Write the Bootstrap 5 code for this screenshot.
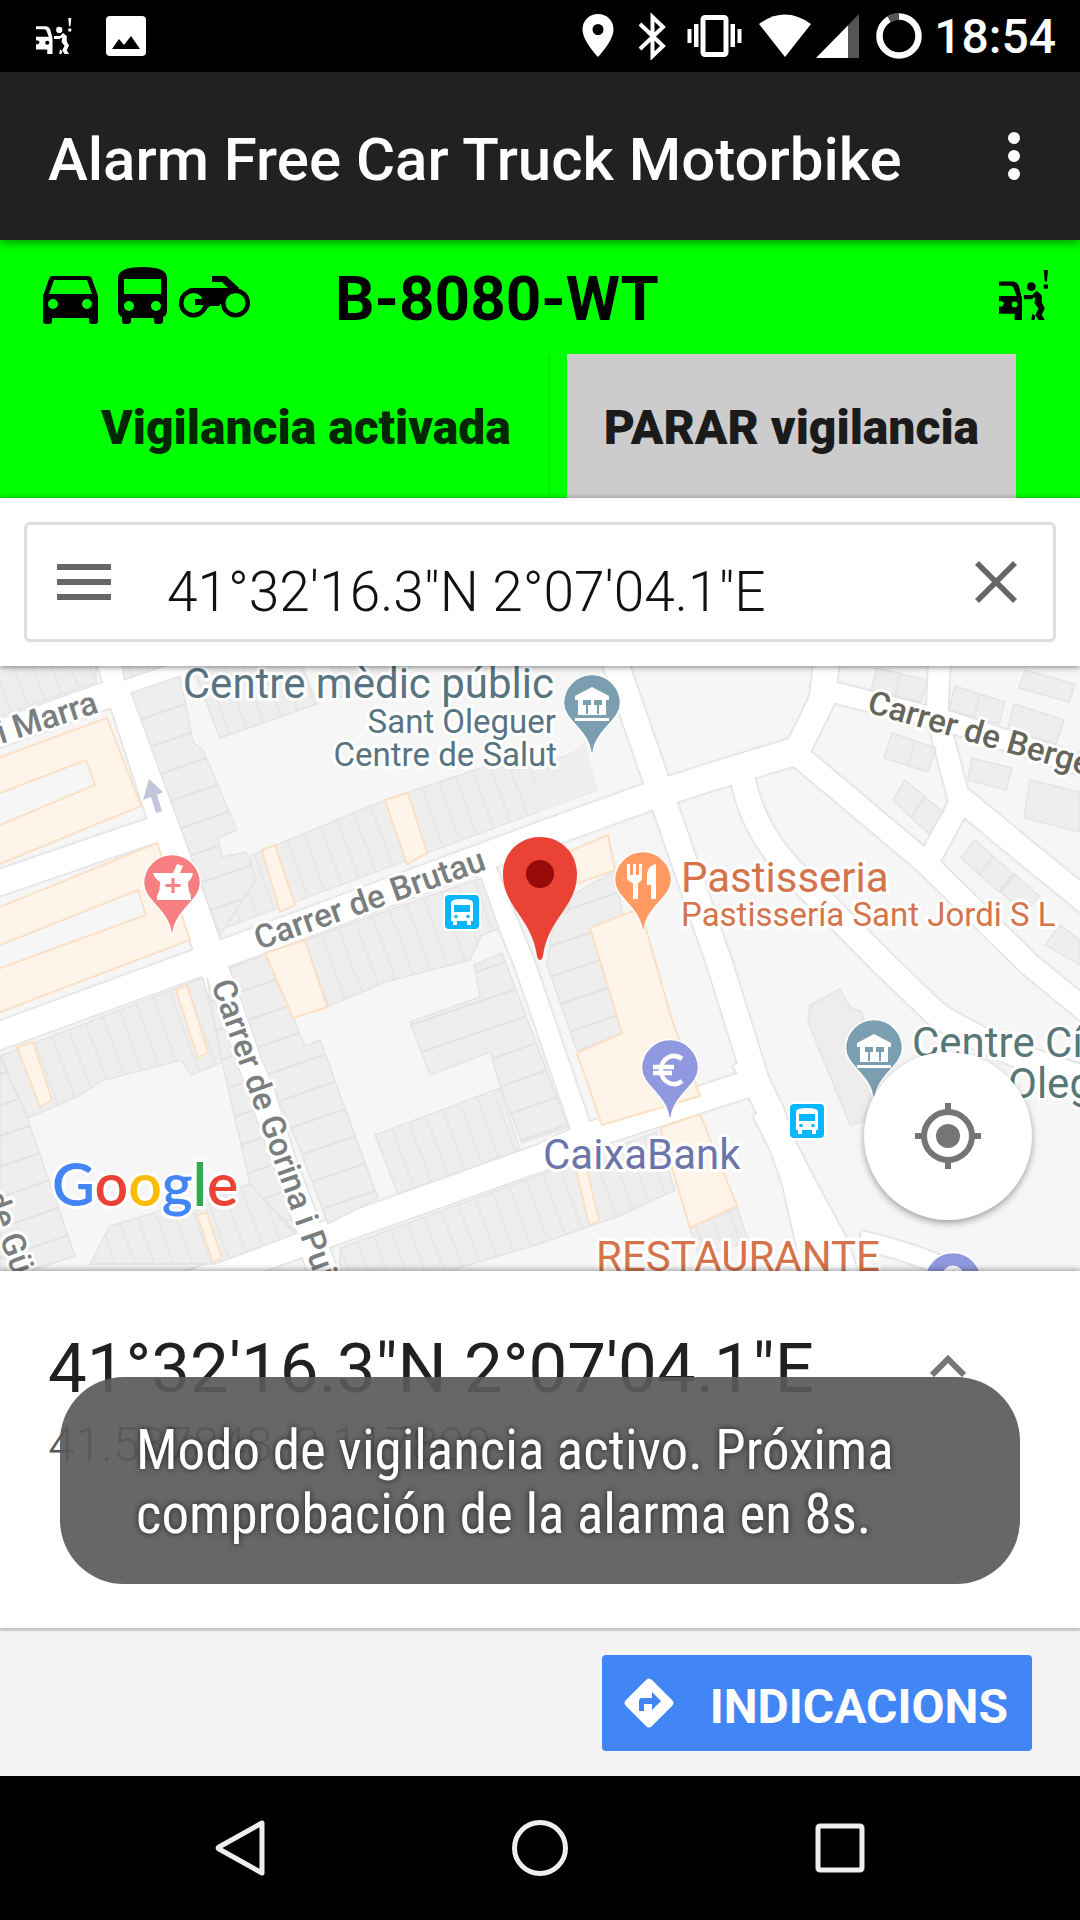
<!DOCTYPE html>
<html lang="es">
<head>
<meta charset="utf-8">
<meta name="viewport" content="width=device-width, initial-scale=1">
<title>Alarm Free Car Truck Motorbike</title>
<link href="https://cdn.jsdelivr.net/npm/bootstrap@5.3.0/dist/css/bootstrap.min.css" rel="stylesheet">
<style>
  body { font-family: Roboto, "Liberation Sans", sans-serif; color: #212121; line-height: 1.2; }
  svg { display: block; flex: none; }
  .btn-plain { background: none; border: 0; padding: 0; border-radius: 0; }
  .status-bar { background: #000; color: #fff; height: 72px; padding: 0 24px 0 36px; }
  .status-time { font-size: 48px; font-weight: 500; line-height: 72px; padding-top: 2px; margin-left: 9px; }
  .app-bar { background: #212121; color: #fff; height: 168px; padding: 8px 48px 0; box-shadow: 0 2px 10px rgba(0,0,0,.45); position: relative; z-index: 2; }
  .app-title { font-size: 60px; font-weight: 500; line-height: 72px; margin: 0; }
  .vehicle-zone { background: #0f0; color: #000; }
  .plate-row { height: 114px; padding: 0 31px 4px 43px; }
  .plate { font-size: 62px; font-weight: 700; line-height: 72px; margin: 8px 0 0 82px; }
  .watch-row { gap: 16px; padding: 0 64px; }
  .watch-btn { font-size: 48px; font-weight: 900; line-height: 56px; padding: 46px 37px 42px; border: 0; border-radius: 0; color: rgba(0,0,0,.87); white-space: nowrap; }
  .watch-on { background: #0f0; border-right: 3px solid #00f200; }
  .watch-stop { background: #ccc; color: #1b1b1b; }
  .search-zone { background: #fff; padding: 24px; box-shadow: 0 1px 6px rgba(0,0,0,.5); position: relative; z-index: 1; }
  .search-box { height: 120px; border: 3px solid #ddd; border-radius: 6px; padding: 0 36px 0 30px; }
  .search-box input { font-size: 55px; font-weight: 300; color: #111; border: 0; padding: 20px 0 0; margin-left: 56px; background: none; outline: 0; min-width: 0; }
  .map-zone { flex: 1 1 0; min-height: 300px; position: relative; overflow: hidden; background: #f5f5f5; }
  .map-zone > svg { width: 100%; height: 100%; position: absolute; inset: 0; }
  .locate-btn { position: absolute; right: 48px; bottom: 51px; width: 168px; height: 168px; border-radius: 50%; border: 0; background: #fff; box-shadow: 0 3px 7px rgba(0,0,0,.35); }
  .place-zone { background: #fff; height: 357px; padding: 56px 48px 0; position: relative; box-shadow: 0 -1px 6px rgba(0,0,0,.4); }
  .place-title { font-size: 69px; font-weight: 400; line-height: 84px; margin: 0; color: #212121; }
  .place-sub { font-size: 48px; font-weight: 300; line-height: 52px; margin: 8px 0 0; color: #555; }
  .chevron-btn { margin: 24px 66px 0 0; }
  .toast-note { position: absolute; left: 60px; right: 60px; top: 106px; padding: 41px 60px 38px 76px; border-radius: 64px; background: rgba(90,90,90,.92); color: #fff; font-family: "Roboto Condensed", Roboto, "Liberation Sans", sans-serif; font-size: 55px; line-height: 64px; text-shadow: 0 0 6px rgba(0,0,0,.7); }
  .action-zone { background: #f4f4f4; border-top: 3px solid #ddd; padding: 24px 48px 25px; }
  .route-btn { background: #4285f4; color: #fff; font-size: 48px; font-weight: 700; line-height: 56px; height: 96px; border: 0; border-radius: 4px; padding: 0 24px 0 22px; gap: 36px; }
  .route-btn span { padding-top: 8px; }
  .nav-zone { background: #000; height: 144px; padding: 0 212px; }
  .halo text { stroke: #fff; stroke-width: 6px; stroke-linejoin: round; paint-order: stroke; }
  .road-case { fill: none; stroke: #e6e6e6; stroke-linejoin: round; }
  .road-fill { fill: none; stroke: #fff; stroke-linejoin: round; }
</style>
</head>
<body class="min-vh-100 d-flex flex-column bg-white">

<svg width="0" height="0" class="position-absolute" aria-hidden="true">
  <symbol id="thief" viewBox="0 0 48 48">
    <path d="M0 11h14q5 1 6 8l2 8v21h-7v-6H0v-7h3l2-3-2-2H0v-5h17l-3-8q-1-2-3-2H0z"/>
    <circle cx="15" cy="33" r="2.800" fill="var(--hole)"/>
    <circle cx="31" cy="16" r="4.200"/>
    <path d="M24 24h8l4-4 5 4v7l3 6-3 6 3 5h-6l-3-5 3-6-4-5 1-6-4 2h-7zM32 42l3 2-1 4h-3zM43 0h4l-1 11h-2zM43 14h4v4h-4z"/>
  </symbol>
</svg>

<header>
  <div class="status-bar d-flex align-items-center">
    <svg width="36" height="36" fill="#fff" style="--hole:#000"><use href="#thief"/></svg>
    <svg class="ms-auto order-1" width="348" height="48" viewBox="578 12 348 48" fill="#fff">
      <path fill-rule="evenodd" d="M599 14c-9 0-15.500 6.500-15.500 15.500C583.500 41 599 57 599 57s15.500-16 15.500-27.500C614.500 20.500 608 14 599 14zm0 21a5.500 5.500 0 1 1 0-11 5.500 5.500 0 0 1 0 11z"/>
      <path d="M641 24l23 22-10.500 10V17L664 27l-23 22" fill="none" stroke="#fff" stroke-width="4"/>
      <rect x="704" y="17.500" width="23" height="37" rx="2" fill="none" stroke="#fff" stroke-width="5"/>
      <path d="M688.500 29h4v14h-4zM695 24h4.500v23H695zM731.500 24h4.500v23h-4.500zM738.500 29h4v14h-4z"/>
      <path d="M760 24q26-19 52 0l-26 33z"/>
      <path d="M860 14v44h-43z" fill="#555"/><path d="M849 25.500V58h-32z"/>
      <circle cx="900" cy="36" r="19.500" fill="none" stroke="#fff" stroke-width="6.500"/>
      <path d="M890 19.300Q895 16.500 900 16.500" fill="none" stroke="#555" stroke-width="7"/>
    </svg>
    <svg width="40" height="40" viewBox="0 0 40 40" style="margin-left:34px"><rect width="40" height="40" rx="4" fill="#fff"/><path d="M6 33l7-10 5 6 7-9 9 13z"/></svg>
    <span class="status-time order-2">18:54</span>
  </div>
  <div class="app-bar d-flex align-items-center">
    <h1 class="app-title">Alarm Free Car Truck Motorbike</h1>
    <button class="btn-plain ms-auto" aria-label="Más opciones">
      <svg width="36" height="56" viewBox="0 0 36 56" fill="#fff"><circle cx="18" cy="6" r="6"/><circle cx="18" cy="24" r="6"/><circle cx="18" cy="42" r="6"/></svg>
    </button>
  </div>
</header>

<section class="vehicle-zone">
  <div class="plate-row d-flex align-items-center">
    <svg width="210" height="58" viewBox="43 266 210 58">
      <path fill-rule="evenodd" d="M53 276h35q3 0 4 3l6 17v25q0 3-3 3h-3q-3 0-3-3v-3H52v3q0 3-3 3h-3q-3 0-3-3v-25l6-17q1-3 4-3zm1 4l-5 14h43l-5-14zm-1 29a5 5 0 1 0 0-10 5 5 0 0 0 0 10zm34 0a5 5 0 1 0 0-10 5 5 0 0 0 0 10z"/>
      <path fill-rule="evenodd" d="M118 278q0-11 24.500-11T167 278v33q0 4-4 6v4q0 3-3 3h-3q-3 0-3-3v-3h-23v3q0 3-3 3h-3q-3 0-3-3v-4q-4-2-4-6zm6 1v15h37v-15zm5 32a5 5 0 1 0 0-10 5 5 0 0 0 0 10zm27 0a5 5 0 1 0 0-10 5 5 0 0 0 0 10z"/>
      <g fill="none" stroke="#000" stroke-width="4.500"><circle cx="193.500" cy="303" r="12.300"/><circle cx="235.500" cy="303" r="12.300"/></g>
      <path d="M188 288h40l-6-6h-10v-6h14l13 12-3 5-8 1-9 12h-9l-8 7 3-8h-10v-6h12q-3-7-12-9z"/>
    </svg>
    <span class="plate">B-8080-WT</span>
    <svg class="ms-auto" width="50" height="50" style="--hole:#0f0"><use href="#thief"/></svg>
  </div>
  <div class="watch-row d-flex">
    <button class="btn watch-btn watch-on flex-fill">Vigilancia activada</button>
    <button class="btn watch-btn watch-stop">PARAR vigilancia</button>
  </div>
</section>

<section class="search-zone">
  <div class="search-box d-flex align-items-center">
    <button class="btn-plain" aria-label="Menú"><svg width="54" height="36" fill="#666"><path d="M0 0h54v6H0zM0 15h54v6H0zM0 30h54v6H0z"/></svg></button>
    <input class="flex-fill" type="text" aria-label="Buscar ubicación" value="41°32'16.3&quot;N 2°07'04.1&quot;E">
    <button class="btn-plain" aria-label="Borrar"><svg width="42" height="42" stroke="#666" stroke-width="5.500"><path d="M2 2l38 38M40 2L2 40"/></svg></button>
  </div>
</section>

<main class="map-zone">
  <svg viewBox="0 666 1080 605" preserveAspectRatio="xMidYMid slice" role="img" aria-label="Mapa">
    <defs>
      <pattern id="lotA" width="18" height="60" patternUnits="userSpaceOnUse" patternTransform="rotate(-20)"><path fill="#eee" d="M0 0h18v60H0z"/><path d="M.5 0v60" stroke="#e4e4e4" stroke-width="1.500"/></pattern>
      <pattern id="lotB" width="60" height="29" patternUnits="userSpaceOnUse" patternTransform="rotate(-19)"><path fill="#eee" d="M0 0h60v29H0z"/><path d="M0 1h60" stroke="#e2e2e2" stroke-width="2"/></pattern>
      <symbol id="pin" viewBox="0 0 60 84" overflow="visible"><path d="M30 1.500a28.500 28.500 0 0 1 28.500 28.500C58.500 48 34 56 31 80h-2C26 56 1.500 48 1.500 30A28.500 28.500 0 0 1 30 1.500z"/></symbol>
      <g id="civic" fill="#fff"><path d="M-17-8L0-17l17 9v4h-34zM-14-4h28v15h-28zM-17 14h34v3h-34z"/><path d="M-9-4h8v5h-3v9h-2V1h-3zM2-4h8v5H7v9H5V1H2z" fill="#7b9eb0"/></g>
      <g id="busstop"><rect x="-2" y="-2" width="38" height="38" rx="5" fill="#fff"/><rect width="34" height="34" rx="4" fill="#0ab7ff"/><path fill="#fff" d="M6 8q0-4 11-4t11 4v18h-2v4h-4v-4H12v4H8v-4H6z"/><path fill="#0ab7ff" d="M9 10h16v7H9z"/><circle cx="11" cy="21.500" r="1.800" fill="#0ab7ff"/><circle cx="23" cy="21.500" r="1.800" fill="#0ab7ff"/></g>
      <g id="roads">
        <path d="M-10 1039L225 953 540 836 648 797 733 770 797 751" stroke-width="27"/>
        <path d="M108 650L119 687 160 812 205 940 213 967 253 1070 281 1160 330 1290" stroke-width="28"/>
        <path d="M-10 737L110 694 200 660" stroke-width="26"/>
        <path d="M-10 886L165 826" stroke-width="25"/>
        <path d="M611 650L656 780 720 965 757 1083" stroke-width="25"/>
        <path d="M745 1060L770 1110 795 1180 820 1290" stroke-width="26"/>
        <path d="M765 1110L800 1180 835 1245 850 1290" stroke-width="26"/>
        <path d="M190 1284L330 1233 540 1158 585 1137 763 1079" stroke-width="26"/>
        <path d="M478 850L525 965 585 1140" stroke-width="20"/>
        <path d="M828 650L822 700 794 757" stroke-width="25"/>
        <path d="M794 752L925 862 1030 965 1090 1014" stroke-width="22"/>
        <path d="M742 775Q752 830 793 872L885 965 935 1013Q990 1050 1090 1080" stroke-width="24"/>
        <path d="M940 650L937 715 960 803 928 862" stroke-width="21"/>
        <path d="M956 795L1090 905" stroke-width="24"/>
        <path d="M825 690L950 722 1090 768" stroke-width="20"/>
        <path d="M860 1240Q930 1255 990 1290" stroke-width="18"/>
      </g>
    </defs>
    <path fill="#f6f6f6" d="M-500 0h2080v2000H-500z"/>

    <g class="road-case"><use href="#roads" style="filter:drop-shadow(0 0 1px #d2d2d2) drop-shadow(0 0 1px #d8d8d8)"/></g>
    <g class="road-fill"><use href="#roads"/></g>

    <!-- building lots -->
    <g fill="url(#lotA)" stroke="#e4e4e4" stroke-width="1.500">
      <path d="M-5 660H96v22L-5 718zM122 660h60l-58 20z"/>
      <path d="M190 660l30 78 97-34-17-44zM330 660l10 38 70-30v-8z"/>
      <path d="M250 856l135-56 105-35 30 5 65-20 12 40-370 137-5 0 33-44z"/>
      <path d="M305 940l176-62 18 50-18 8-11 24-85 22-58 25z"/>
      <path d="M375 1135l125-47 20 62-122 44z"/>
      <path d="M0 1056l203-78 20 84-32 13-10-15-80 21-22 15-51 22z"/>
      <path d="M110 1226l140-42 45 50-80 30H90z"/>
      <path d="M340 1248l230-84 86-32 19 58-56 26-80 28-100 30h-99z"/>
      <path d="M690 1228l47-20 12 34-50 14z"/>
    </g>
    <g fill="url(#lotB)" stroke="#e4e4e4" stroke-width="1.500">
      <path d="M131 693l49-17 13 66 10 8 34 80-19 8 4 19 24-5 10 28-36 55z"/>
      <path d="M230 968l35-14 28 64 12 28 15-6 58 158-50 26-28-74-38-90z"/>
      <path d="M410 1022l70-25-6-32 28-12 66 174-46 16-22-58-10-33-60 23z"/>
      <path d="M0 1056l28 64 47 136-75 25z"/>
      <path d="M207 978l90 256-47-50-28-122z"/>
      <path d="M556 905l58-34 20 100-12 62-45 18-30-86z"/>
      <path d="M808 1022l2-17 30-16 10 18 12 5 18 105-30 8z" fill="#ededed"/>
      <path d="M545 885l20-14 8 12-6 30z" fill="#ededed"/>
    </g>
    <path d="M525 790l60-48 12 48-58 22z" fill="#eee"/>

    <!-- commercial lots -->
    <g fill="#fff4e9" stroke="#fbe0c4" stroke-width="2">
      <path fill-rule="evenodd" d="M-5 759l112-41 34 88L-5 866zM-5 795l91-35 9 25-100 42z"/>
      <path fill-rule="evenodd" d="M-5 909l162-66 33 97L-5 1014zM-5 947l143-57 8 25-151 55z"/>
      <path d="M262 850l13-5 20 60-15 7zM385 800l23-7 19 60-20 11zM265 953l40-13 22 67-34 11zM17 1047l16-5 19 58-12 7zM176 990l11-5 21 67-10 6zM197 1215l10-2 15 45-9 4z"/>
      <path d="M568 852l40-17 7 35-40 14zM590 928l50-20 32 112 28 76-98 29-25-72 45-20z"/>
      <path d="M660 1128l40-14 37 92-47 22zM575 1165l10-4 14 60-10 4z"/>
    </g>
    <g fill="#eee" stroke="#e4e4e4" stroke-width="1.500">
      <path d="M877 668l50 12-6 22-50-12zM900 674l-5 22M955 686l50 16-6 22-50-14zM980 694l-6 22M1014 704l50 16-8 24-48-16zM1025 670l50 14-6 18-50-14zM892 733l44 15-8 24-44-14zM915 741l-7 24M905 780l38 32-14 22-36-34zM925 796l-14 22M972 758l40 10-6 22-38-10zM1030 780l50 12v40l-56-14zM975 840l38 34-14 18-38-34zM994 856l-14 18M1015 874l24 22-14 18-24-22zM1060 925l20 15v25l-35-20z"/>
    </g>
    <path d="M149 779l14 13-6 3 5 16-6 2-5-16-8 3z" fill="#c3c5da"/>

    <!-- street names -->
    <g class="halo" font-size="33" font-weight="500" fill="#7b7e7e">
      <text transform="translate(1 744) rotate(-18)">i Marra</text>
      <text transform="translate(259 950) rotate(-19.500)">Carrer de Brutau</text>
      <text transform="translate(211 984) rotate(70.500)">Carrer de Gorina i Puig</text>
      <text transform="translate(-16 1196) rotate(70)">de Güell</text>
      <text transform="translate(866 712) rotate(16)" fill="#65655a">Carrer de Bergedà</text>
    </g>

    <!-- places -->
    <g class="halo" font-size="33">
      <g fill="#587481" text-anchor="end"><text x="554" y="698" font-size="42">Centre mèdic públic</text><text x="556" y="733">Sant Oleguer</text><text x="557" y="766">Centre de Salut</text></g>
      <g fill="#d5734b"><text x="681" y="892" font-size="42">Pastisseria</text><text x="681" y="926">Pastissería Sant Jordi S L</text><text x="596" y="1271" font-size="42">RESTAURANTE</text></g>
      <text x="543" y="1169" font-size="42" fill="#6d74a9">CaixaBank</text>
      <g fill="#587878" font-size="42"><text x="912" y="1057">Centre Cívic</text><text x="1008" y="1098">Oleguer</text></g>
    </g>

    <g stroke="#fff" stroke-width="1.500">
      <use href="#pin" x="562" y="673" width="60" height="84" fill="#7b9eb0"/>
      <use href="#pin" x="142" y="853" width="60" height="84" fill="#f77f81"/>
      <use href="#pin" x="613" y="850" width="60" height="84" fill="#ff9a63"/>
      <use href="#pin" x="640" y="1038" width="60" height="84" fill="#9099df"/>
      <use href="#pin" x="844" y="1018" width="60" height="84" fill="#7b9eb0"/>
      <use href="#pin" x="923" y="1251" width="60" height="84" fill="#9099df"/>
    </g>
    <use href="#civic" x="592" y="704"/><use href="#civic" x="874" y="1051"/>
    <path fill="#fff" d="M153 873h20l4-9 6 2-3 7h13q-1 6-5 9 0 8 3 14v4h-34v-4q3-5 3-14-5-3-7-9z"/>
    <path d="M173 878v15M165.500 885.500h15" stroke="#f77f81" stroke-width="3"/>
    <path fill="#fff" d="M627 864h3v11h3v-11h3v11h3v-11h3v14q0 3-4 5v16h-5v-16q-6-2-6-5zM656 864v35h-5v-14h-4v-12q2-8 9-9z"/>
    <path d="M682 1059q-6-5-13-2-8 4-8 13t8 13q7 3 13-2M653 1067h21M653 1073h19" fill="none" stroke="#fff" stroke-width="4.500"/>
    <circle cx="953" cy="1276" r="8" fill="none" stroke="#fff" stroke-width="5"/>
    <use href="#busstop" x="445" y="895"/><use href="#busstop" x="790" y="1104"/>

    <path fill="#ea4335" d="M540 837c21 0 37 16 37 37 0 33-29 44-34 82q-1 4-3 4t-3-4c-5-38-34-49-34-82 0-21 16-37 37-37z"/>
    <circle cx="540" cy="874" r="14" fill="#960a0a"/>

    <g class="halo"><text x="52" y="1206" font-family="Lato, sans-serif" font-size="59" font-weight="600"><tspan fill="#4285f4">G</tspan><tspan fill="#ea4335">o</tspan><tspan fill="#fbbc05">o</tspan><tspan fill="#4285f4">g</tspan><tspan fill="#34a853">l</tspan><tspan fill="#ea4335">e</tspan></text></g>
  </svg>
  <button class="locate-btn d-flex align-items-center justify-content-center p-0" aria-label="Mi ubicación">
    <svg width="68" height="68" viewBox="0 0 68 68" fill="none" stroke="#757575" stroke-width="6"><circle cx="34" cy="34" r="24"/><circle cx="34" cy="34" r="12" fill="#757575" stroke="none"/><path d="M34 1v9M34 58v9M1 34h9M58 34h9"/></svg>
  </button>
</main>

<section class="place-zone">
  <div class="d-flex justify-content-between align-items-start">
    <div>
      <h2 class="place-title">41°32'16.3"N 2°07'04.1"E</h2>
      <p class="place-sub">41.537848, 2.117809</p>
    </div>
    <button class="btn-plain chevron-btn" aria-label="Ampliar"><svg width="36" height="26" fill="none" stroke="#777" stroke-width="6"><path d="M2 24L18 8l16 16"/></svg></button>
  </div>
  <div class="toast-note" role="status">Modo de vigilancia activo. Próxima<br>comprobación de la alarma en 8s.</div>
</section>

<section class="action-zone d-flex justify-content-end">
  <button class="btn route-btn d-flex align-items-center">
    <svg width="50" height="50" viewBox="0 0 50 50"><path d="M22 2q3-3 6 0l20 20q3 3 0 6L28 48q-3 3-6 0L2 28q-3-3 0-6z" fill="#fff"/><path d="M15 33V23q0-3 3-3h10v-6l9 9-9 9v-6h-8v7z" fill="#4285f4"/></svg>
    <span>INDICACIONS</span>
  </button>
</section>

<nav class="nav-zone d-flex justify-content-between align-items-center" aria-label="Sistema">
  <button class="btn-plain" aria-label="Atrás"><svg width="56" height="60" viewBox="0 0 56 60" fill="none" stroke="#eee" stroke-width="5" stroke-linejoin="round"><path d="M50 5v50L7 31q-2-1 0-2z"/></svg></button>
  <button class="btn-plain" aria-label="Inicio"><svg width="60" height="60" fill="none" stroke="#eee" stroke-width="5"><circle cx="30" cy="30" r="25.500"/></svg></button>
  <button class="btn-plain" aria-label="Recientes"><svg width="56" height="56" fill="none" stroke="#eee" stroke-width="5"><rect x="6" y="6" width="44" height="44" rx="2"/></svg></button>
</nav>

<script src="https://cdn.jsdelivr.net/npm/bootstrap@5.3.0/dist/js/bootstrap.bundle.min.js"></script>
</body>
</html>
